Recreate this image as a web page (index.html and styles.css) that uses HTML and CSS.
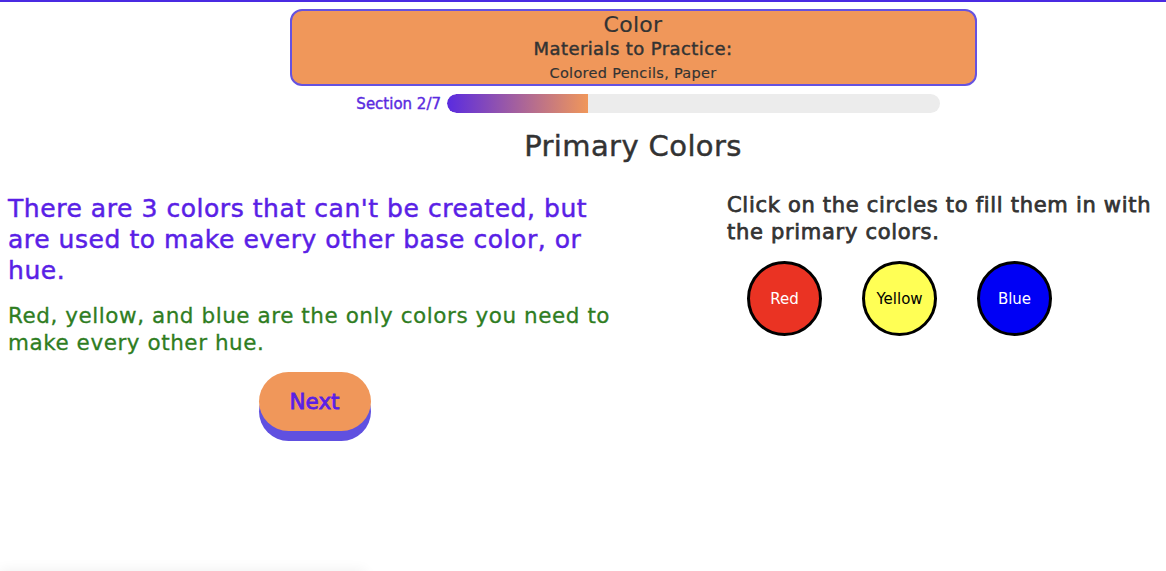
FILE: index.html
```html
<!DOCTYPE html>
<html>
<head>
<meta charset="utf-8">
<link rel="stylesheet" href="styles.css">
</head>
<body>
<div class="top">
  <div class="header">
    <div class="h-title">Color</div>
    <div class="h-sub">Materials to Practice:</div>
    <div class="h-mat">Colored Pencils, Paper</div>
  </div>
  <div class="progress">
    <span class="p-label">Section 2/7</span>
    <div class="p-track"><div class="p-fill" style="width:28.57%"></div></div>
  </div>
  <h1 class="title">Primary Colors</h1>
</div>
<div class="main">
  <div class="left">
    <h2 class="lead">There are 3 colors that can't be created, but are used to make every other base color, or hue.</h2>
    <p class="note">Red, yellow, and blue are the only colors you need to make every other hue.</p>
    <div class="btn-row"><button class="next">Next</button></div>
  </div>
  <div class="right">
    <p class="instr">Click on the circles to fill them in with the primary colors.</p>
    <div class="circles">
      <div class="circle red">Red</div>
      <div class="circle yellow">Yellow</div>
      <div class="circle blue">Blue</div>
    </div>
  </div>
</div>
<div class="dock"></div>
</body>
</html>
```
FILE: styles.css
```css
* { box-sizing: border-box; }
html, body { height: 100%; }
body {
  margin: 0;
  border-top: 2px solid #4a2ae2;
  font-family: "DejaVu Sans", "Open Sans", sans-serif;
  color: #333;
  background: #fff;
  overflow: hidden;
}
.top {
  padding-left: 100px;
  display: flex;
  flex-direction: column;
  align-items: center;
}
.header {
  margin-top: 7px;
  width: 687px;
  height: 77px;
  padding-top: 1px;
  background: #f0975a;
  border: 2px solid #6552e0;
  border-radius: 12px;
  text-align: center;
  color: #333;
}
.h-title { font-size: 22px; line-height: 26px; letter-spacing: 0.3px; -webkit-text-stroke: 0.2px #333; }
.h-sub { font-size: 18px; line-height: 22px; letter-spacing: 0.4px; -webkit-text-stroke: 0.45px #333; }
.h-mat { font-size: 14.5px; line-height: 26px; letter-spacing: 0.3px; -webkit-text-stroke: 0.15px #333; }
.progress {
  align-self: flex-start;
  margin: 7px 0 0 255px;
  display: flex;
  align-items: center;
  height: 20px;
}
.p-label {
  width: 92px;
  padding-right: 6px;
  padding-top: 2px;
  text-align: right;
  white-space: nowrap;
  color: #5a2be0;
  font-size: 15px;
  line-height: 20px;
  -webkit-text-stroke: 0.4px #5a2be0;
}
.p-track {
  width: 493px;
  height: 19px;
  margin-top: 1px;
  background: #ececec;
  border-radius: 10px;
  overflow: hidden;
}
.p-fill {
  height: 100%;
  background: linear-gradient(to right, #5a2be0, #f0975a);
  border-radius: 10px 0 0 10px;
}
.title {
  margin: 14px 0 0;
  font-size: 29px;
  line-height: 38px;
  font-weight: normal;
  letter-spacing: 0.4px;
  -webkit-text-stroke: 0.45px #333;
  color: #333;
}
.main {
  display: flex;
}
.left {
  width: 621px;
  padding-left: 8px;
}
.lead {
  margin: 28px 0 0;
  font-size: 25px;
  line-height: 31px;
  font-weight: normal;
  letter-spacing: 0.55px;
  -webkit-text-stroke: 0.5px #5a1fe6;
  color: #5a1fe6;
}
.note {
  margin: 16px 0 0;
  font-size: 21.5px;
  line-height: 27px;
  letter-spacing: 0.55px;
  -webkit-text-stroke: 0.3px #2f7d1f;
  color: #2f7d1f;
}
.btn-row { display: flex; justify-content: center; margin-top: 16px; }
.next {
  width: 112px;
  height: 59px;
  border: none;
  border-radius: 30px;
  background: #f0975a;
  box-shadow: 0 10px 0 #6050e0;
  color: #5a1fe6;
  font-family: inherit;
  font-size: 21.5px;
  -webkit-text-stroke: 0.8px #5a1fe6;
  padding: 0;
}
.right {
  margin-left: 106px;
  flex: 1;
}
.instr {
  margin: 27px 0 0;
  font-size: 21px;
  line-height: 27px;
  letter-spacing: 0.7px;
  -webkit-text-stroke: 0.75px #333;
  color: #333;
}
.circles { display: flex; margin-top: 15px; }
.circle {
  width: 75px;
  height: 75px;
  margin: 0 20px;
  border-radius: 50%;
  border: 3px solid #000;
  display: flex;
  align-items: center;
  justify-content: center;
  font-size: 15px;
}
.red { background: #ea3323; color: #fff; }
.yellow { background: #ffff55; color: #000; }
.blue { background: #0000f5; color: #fff; }
.dock {
  position: fixed;
  left: 0;
  top: 100%;
  width: 365px;
  height: 40px;
  background: #fff;
  box-shadow: 0 0 14px rgba(0, 0, 0, 0.07);
}
```
